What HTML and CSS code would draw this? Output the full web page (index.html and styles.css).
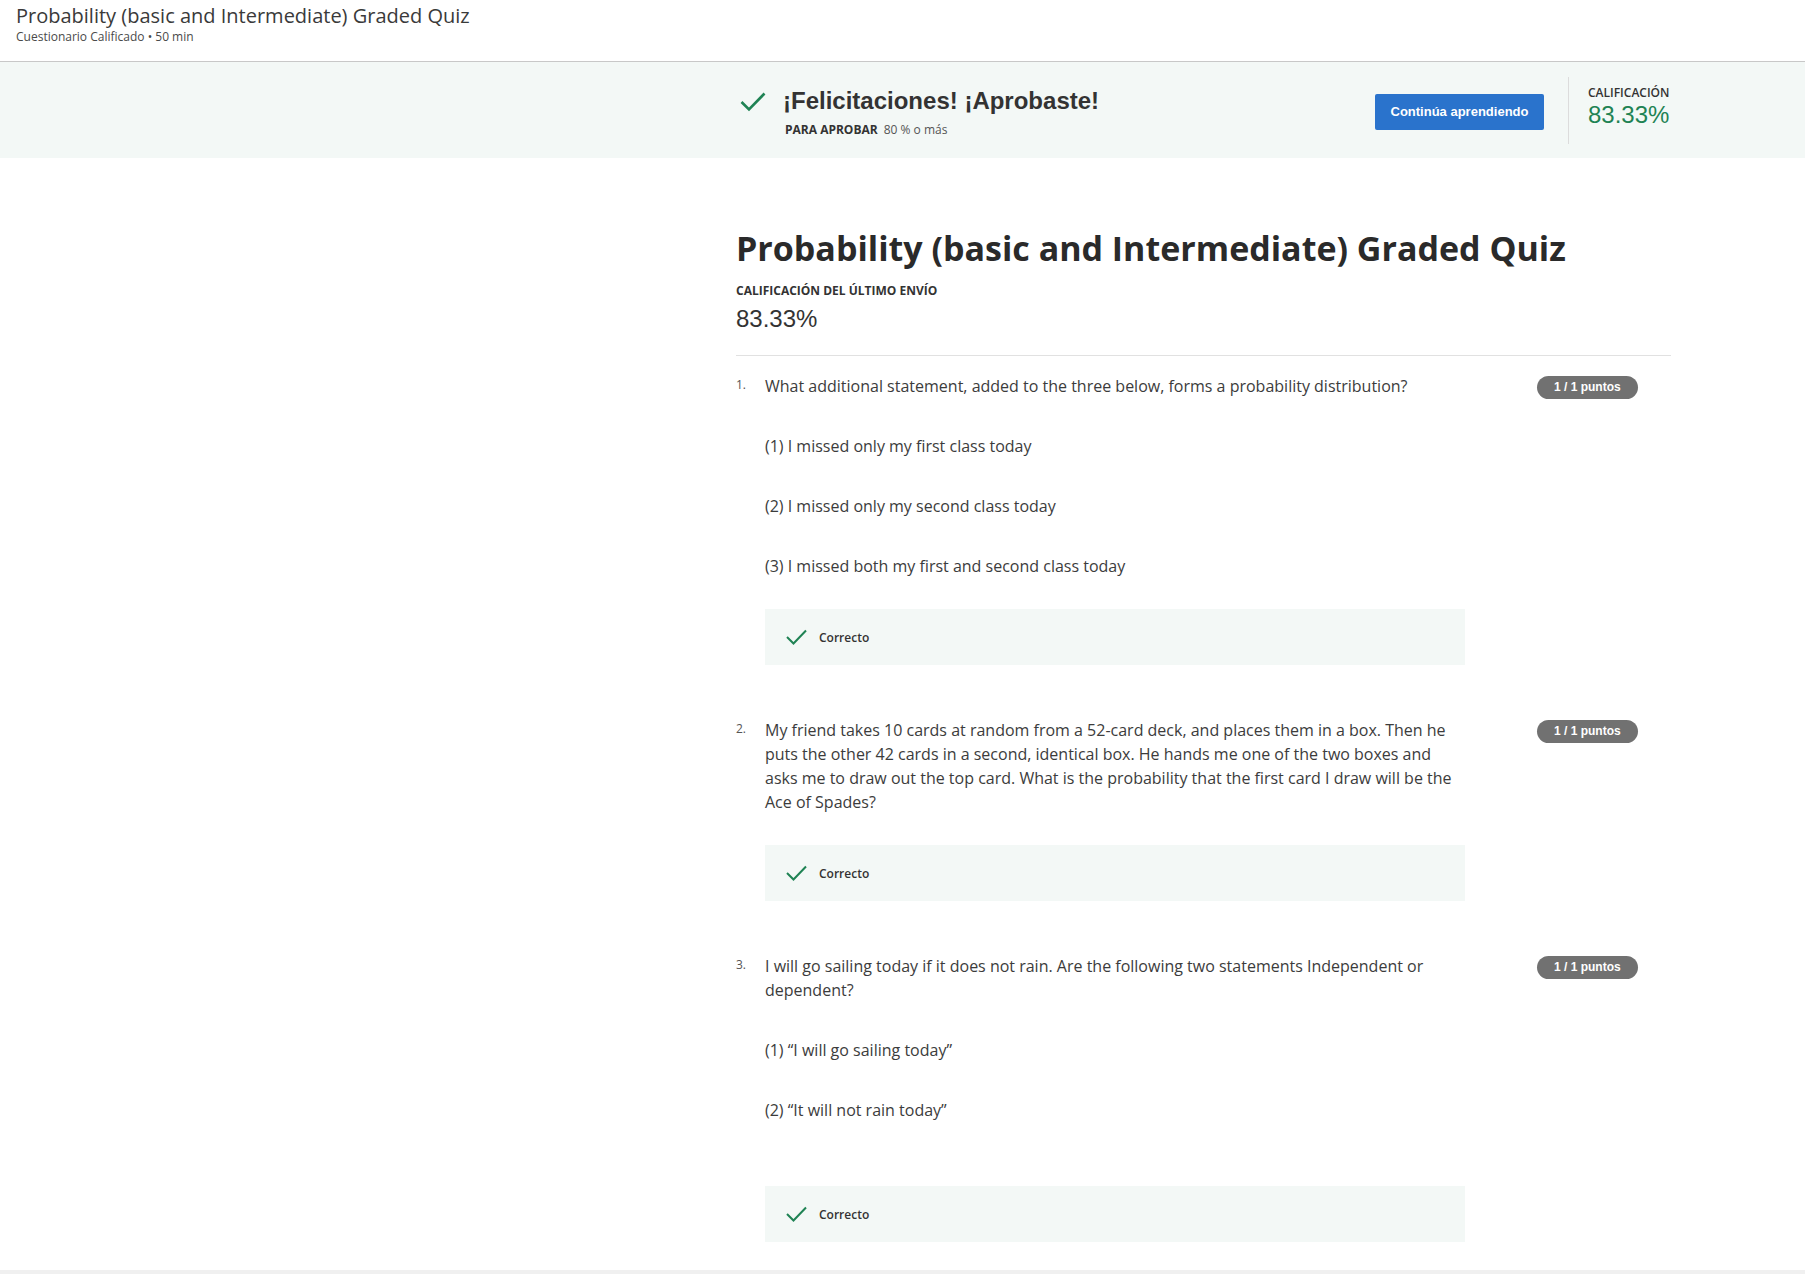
FILE: index.html
```html
<!DOCTYPE html>
<html lang="es">
<head>
<meta charset="utf-8">
<title>Probability (basic and Intermediate) Graded Quiz</title>
<link rel="stylesheet" href="styles.css">
</head>
<body>
<div class="page">
  <header class="topbar">
    <div class="topbar-title">Probability (basic and Intermediate) Graded Quiz</div>
    <div class="topbar-sub">Cuestionario Calificado • 50 min</div>
  </header>

  <section class="banner">
    <div class="banner-inner">
      <div class="result">
        <svg class="result-icon" width="26" height="20" viewBox="0 0 26 20" aria-hidden="true"><polyline points="1.5,10 9,17.5 24.5,1.5" fill="none" stroke="currentColor" stroke-width="2.6"/></svg>
        <div class="result-text">
          <div class="result-title">¡Felicitaciones! ¡Aprobaste!</div>
          <div class="result-req"><span class="req-label">PARA APROBAR</span><span class="req-value">80 % o más</span></div>
        </div>
      </div>
      <button class="btn-primary" type="button">Continúa aprendiendo</button>
      <div class="grade-box">
        <div class="grade-label">CALIFICACIÓN</div>
        <div class="grade-value">83.33%</div>
      </div>
    </div>
  </section>

  <main class="content">
    <h1 class="quiz-title">Probability (basic and Intermediate) Graded Quiz</h1>
    <div class="last-label">CALIFICACIÓN DEL ÚLTIMO ENVÍO</div>
    <div class="last-value">83.33%</div>
    <hr class="divider">

    <div class="question">
      <div class="q-num">1.</div>
      <div class="q-body">
        <p class="q-text">What additional statement, added to the three below, forms a probability distribution?</p>
        <p class="q-text">(1) I missed only my first class today</p>
        <p class="q-text">(2) I missed only my second class today</p>
        <p class="q-text">(3) I missed both my first and second class today</p>
        <div class="feedback">
          <svg class="feedback-icon" width="21" height="16" viewBox="0 0 21 16" aria-hidden="true"><polyline points="1,8 7.5,14.5 20,1.5" fill="none" stroke="currentColor" stroke-width="2"/></svg>
          <span class="feedback-text">Correcto</span>
        </div>
      </div>
      <div class="q-points"><span class="badge">1 / 1 puntos</span></div>
    </div>

    <div class="question">
      <div class="q-num">2.</div>
      <div class="q-body">
        <p class="q-text">My friend takes 10 cards at random from a 52-card deck, and places them in a box. Then he puts the other 42 cards in a second, identical box. He hands me one of the two boxes and asks me to draw out the top card. What is the probability that the first card I draw will be the Ace of Spades?</p>
        <div class="feedback">
          <svg class="feedback-icon" width="21" height="16" viewBox="0 0 21 16" aria-hidden="true"><polyline points="1,8 7.5,14.5 20,1.5" fill="none" stroke="currentColor" stroke-width="2"/></svg>
          <span class="feedback-text">Correcto</span>
        </div>
      </div>
      <div class="q-points"><span class="badge">1 / 1 puntos</span></div>
    </div>

    <div class="question">
      <div class="q-num">3.</div>
      <div class="q-body">
        <p class="q-text">I will go sailing today if it does not rain. Are the following two statements Independent or dependent?</p>
        <p class="q-text">(1) “I will go sailing today”</p>
        <p class="q-text">(2) “It will not rain today”</p>
        <div class="feedback feedback--spaced">
          <svg class="feedback-icon" width="21" height="16" viewBox="0 0 21 16" aria-hidden="true"><polyline points="1,8 7.5,14.5 20,1.5" fill="none" stroke="currentColor" stroke-width="2"/></svg>
          <span class="feedback-text">Correcto</span>
        </div>
      </div>
      <div class="q-points"><span class="badge">1 / 1 puntos</span></div>
    </div>
  </main>
</div>
</body>
</html>
```

FILE: styles.css
```css
* { box-sizing: border-box; }

html, body {
  margin: 0;
  padding: 0;
}

body {
  background: #f0f0f0;
  font-family: "Open Sans", "Liberation Sans", Arial, sans-serif;
  color: #3c3c3c;
}

.page {
  background: #ffffff;
}

/* Top bar */
.topbar {
  height: 62px;
  border-bottom: 1px solid #c8c8c8;
  padding: 3px 16px 0 16px;
}

.topbar-title {
  font-size: 20px;
  line-height: 26px;
  color: #3a3a3a;
}

.topbar-sub {
  font-size: 12px;
  line-height: 16px;
  color: #4a4a4a;
}

/* Banner */
.banner {
  background: #f3f8f6;
  height: 96px;
}

.banner-inner {
  margin-left: 736px;
  width: 935px;
  height: 96px;
  display: flex;
  align-items: center;
}

.result {
  flex: 1;
  display: flex;
  align-items: flex-start;
  margin-top: 4px;
}

.result-icon {
  color: #1f8354;
  margin: 5px 17px 0 4px;
  flex: none;
}

.result-title {
  font-family: "Liberation Sans", Arial, sans-serif;
  font-weight: 700;
  font-size: 24px;
  line-height: 28px;
  color: #333333;
}

.result-req {
  margin-top: 7px;
  font-size: 12px;
  line-height: 16px;
  color: #555555;
  padding-left: 2px;
}

.req-label {
  font-weight: 700;
  font-size: 12px;
  color: #333333;
  margin-right: 6px;
}

.btn-primary {
  font-family: "Liberation Sans", Arial, sans-serif;
  font-weight: 700;
  font-size: 13px;
  line-height: 16px;
  color: #ffffff;
  background: #2a73cc;
  border: none;
  border-radius: 2px;
  height: 36px;
  width: 169px;
  padding: 0;
  margin-top: 4px;
  flex: none;
}

.grade-box {
  margin-left: 24px;
  border-left: 1px solid #dcdcdc;
  padding: 8px 0 15px 19px;
  width: 103px;
  flex: none;
}

.grade-label {
  font-size: 12px;
  line-height: 16px;
  font-weight: 600;
  color: #333333;
}

.grade-value {
  font-family: "Liberation Sans", Arial, sans-serif;
  font-size: 24px;
  line-height: 28px;
  color: #1f8354;
}

/* Main content */
.content {
  margin-left: 736px;
  width: 935px;
  padding: 70px 0 28px 0;
}

.quiz-title {
  margin: 0;
  font-size: 34px;
  line-height: 40px;
  font-weight: 700;
  color: #2a2a2a;
}

.last-label {
  margin-top: 15px;
  font-size: 12px;
  line-height: 16px;
  font-weight: 700;
  color: #333333;
}

.last-value {
  margin-top: 4px;
  font-family: "Liberation Sans", Arial, sans-serif;
  font-size: 24px;
  line-height: 32px;
  color: #333333;
}

.divider {
  margin: 20px 0 0 0;
  border: none;
  border-top: 1px solid #e1e1e1;
  height: 0;
}

.question {
  display: flex;
  align-items: flex-start;
  margin-top: 53px;
}

.divider + .question {
  margin-top: 18px;
}

.q-num {
  width: 29px;
  flex: none;
  font-size: 12px;
  line-height: 22px;
  color: #555555;
}

.q-body {
  width: 700px;
  flex: none;
  display: flex;
  flex-direction: column;
  gap: 36px;
}

.q-text {
  margin: 0;
  font-size: 16px;
  line-height: 24px;
  color: #3c3c3c;
}

.feedback {
  margin-top: -5px;
  height: 56px;
  background: #f3f8f6;
  display: flex;
  align-items: center;
  padding-left: 21px;
}

.feedback--spaced {
  margin-top: 28px;
}

.feedback-icon {
  color: #1f8354;
  flex: none;
  margin-right: 12px;
}

.feedback-text {
  font-size: 12px;
  font-weight: 600;
  color: #333333;
}

.q-points {
  margin-left: 72px;
  padding-top: 0;
  flex: none;
}

.badge {
  display: inline-block;
  height: 23px;
  line-height: 23px;
  padding: 0 17px;
  border-radius: 12px;
  background: #717171;
  color: #ffffff;
  font-family: "Liberation Sans", Arial, sans-serif;
  font-weight: 700;
  font-size: 12px;
  white-space: nowrap;
}
```
